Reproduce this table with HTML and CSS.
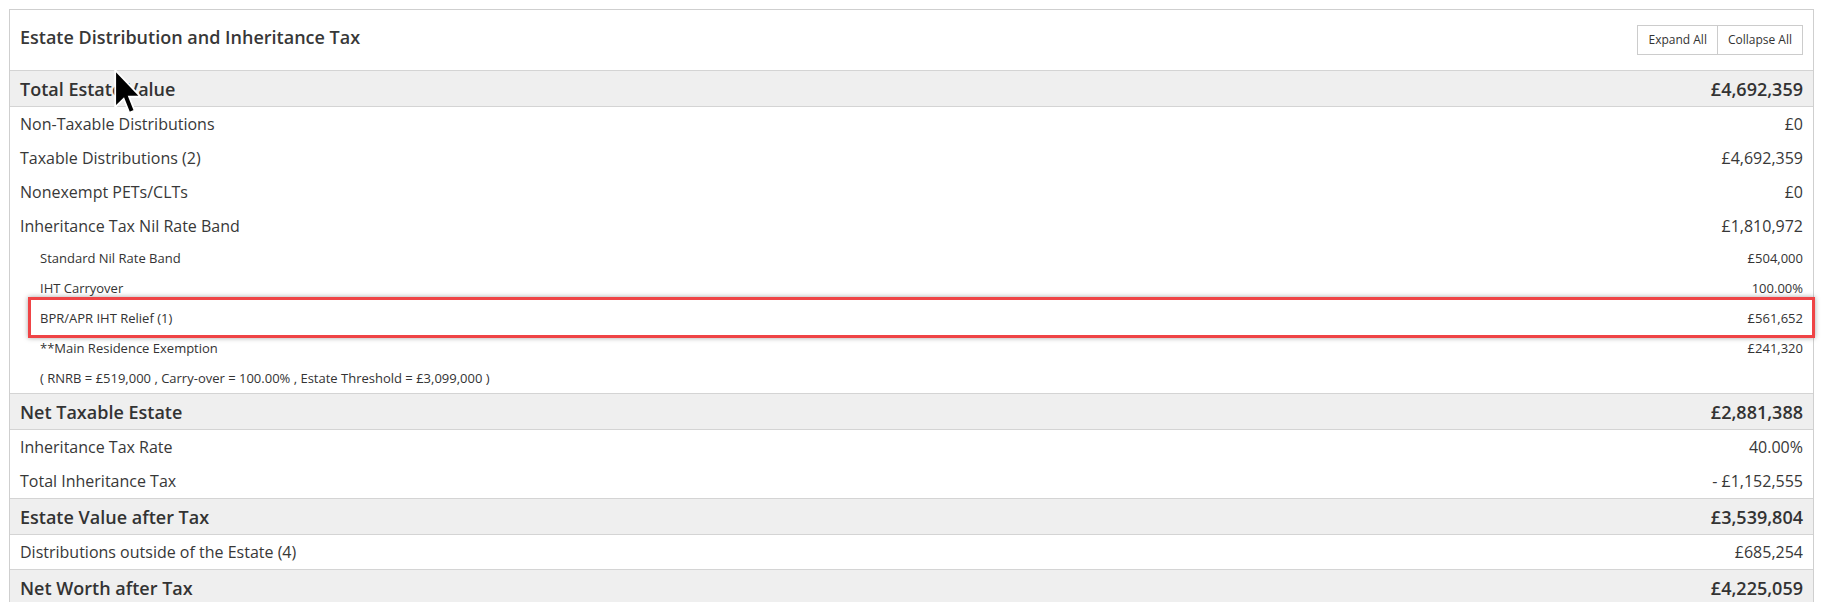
FILE: index.html
```html
<!DOCTYPE html>
<html>
<head>
<meta charset="utf-8">
<title>Estate Distribution and Inheritance Tax</title>
<link rel="stylesheet" href="styles.css">
</head>
<body>
<div class="panel">
  <div class="panel-head">
    <h2 class="title">Estate Distribution and Inheritance Tax</h2>
    <div class="btn-group">
      <button class="btn">Expand All</button>
      <button class="btn">Collapse All</button>
    </div>
  </div>

  <div class="row total"><span>Total Estate Value</span><span>£4,692,359</span></div>
  <div class="group">
    <div class="row item"><span>Non-Taxable Distributions</span><span>£0</span></div>
    <div class="row item"><span>Taxable Distributions (2)</span><span>£4,692,359</span></div>
    <div class="row item"><span>Nonexempt PETs/CLTs</span><span>£0</span></div>
    <div class="row item"><span>Inheritance Tax Nil Rate Band</span><span>£1,810,972</span></div>
    <div class="row sub"><span>Standard Nil Rate Band</span><span>£504,000</span></div>
    <div class="row sub"><span>IHT Carryover</span><span>100.00%</span></div>
    <div class="row sub"><span>BPR/APR IHT Relief (1)</span><span>£561,652</span></div>
    <div class="row sub"><span>**Main Residence Exemption</span><span>£241,320</span></div>
    <div class="row sub"><span>( RNRB = £519,000 , Carry-over = 100.00% , Estate Threshold = £3,099,000 )</span><span></span></div>
  </div>

  <div class="row total"><span>Net Taxable Estate</span><span>£2,881,388</span></div>
  <div class="group">
    <div class="row item"><span>Inheritance Tax Rate</span><span>40.00%</span></div>
    <div class="row item"><span>Total Inheritance Tax</span><span>- £1,152,555</span></div>
  </div>

  <div class="row total"><span>Estate Value after Tax</span><span>£3,539,804</span></div>
  <div class="group">
    <div class="row item"><span>Distributions outside of the Estate (4)</span><span>£685,254</span></div>
  </div>

  <div class="row total"><span>Net Worth after Tax</span><span>£4,225,059</span></div>
</div>

<div class="highlight"></div>

<svg class="cursor" width="27" height="47" viewBox="0 0 12 21">
  <path d="M0.5 0.5 L0.5 17 L4.3 13.3 L6.8 19.6 L9.2 18.6 L6.7 12.4 L11.8 12.4 Z" fill="#000" stroke="#fff" stroke-width="0.8" stroke-linejoin="miter"/>
</svg>
</body>
</html>
```

FILE: styles.css
```css
html, body {
  margin: 0;
  padding: 0;
  background: #fff;
}

body {
  font-family: "Open Sans", "Liberation Sans", sans-serif;
  color: #333;
  overflow: hidden;
}

.panel {
  margin: 9px 0 0 9px;
  width: 1805px;
  box-sizing: border-box;
  border: 1px solid #cfcfcf;
  border-bottom: none;
}

.panel-head {
  height: 60px;
  display: flex;
  justify-content: space-between;
  align-items: flex-start;
  padding: 0 10px;
  border-bottom: 1px solid #d4d4d4;
}

.title {
  margin: 15px 0 0 0;
  font-size: 18px;
  line-height: 24px;
  font-weight: 600;
  color: #383838;
}

.btn-group {
  display: flex;
  margin-top: 15px;
  border: 1px solid #ccc;
}

.btn {
  font-family: "Open Sans", "Liberation Sans", sans-serif;
  font-size: 12px;
  line-height: 28px;
  height: 28px;
  padding: 0 10px;
  margin: 0;
  border: none;
  background: #fff;
  color: #333;
}

.btn + .btn {
  border-left: 1px solid #ccc;
}

.row {
  display: flex;
  justify-content: space-between;
  align-items: center;
  padding: 0 10px;
}

.total {
  height: 35px;
  background: #efefef;
  font-size: 18px;
  font-weight: 600;
  color: #333;
  border-bottom: 1px solid #d4d4d4;
}

.group {
  border-bottom: 1px solid #d4d4d4;
}

.item {
  height: 34px;
  font-size: 16px;
  color: #383838;
}

.sub {
  height: 30px;
  font-size: 13px;
  padding-left: 30px;
  color: #333;
}

.highlight {
  position: absolute;
  left: 28px;
  top: 297px;
  width: 1787px;
  height: 41px;
  box-sizing: border-box;
  border: 3px solid #ef4446;
  box-shadow: 0 0 5px rgba(0, 0, 0, 0.35);
}

.cursor {
  position: absolute;
  left: 114px;
  top: 69px;
}
```
